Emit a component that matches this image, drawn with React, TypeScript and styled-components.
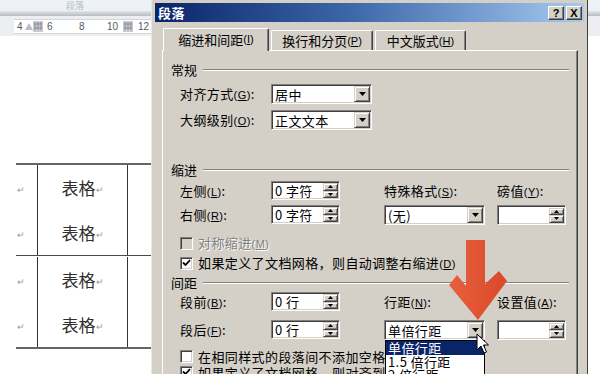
import React from "react";
import styled, { createGlobalStyle } from "styled-components";

const GlobalStyle = createGlobalStyle`
  html, body { margin: 0; padding: 0; background: #ffffff; }
  body { font-family: "Noto Sans CJK SC", "Noto Sans", sans-serif; }
`;

const Screen = styled.div`
  position: relative;
  width: 600px;
  height: 374px;
  overflow: hidden;
  display: flex;
  background: #ffffff;
`;

/* ---------- Word document behind ---------- */
const DocPane = styled.div<{ $w: number }>`
  width: ${(p) => p.$w}px;
  flex-shrink: 0;
  display: flex;
  flex-direction: column;
  background: #ffffff;
`;
const RibbonLabel = styled.div`
  height: 11px;
  background: #eef1f5;
  color: #b3bccb;
  font-size: 9px;
  line-height: 11px;
  padding-left: 66px;
  white-space: nowrap;
  overflow: hidden;
`;
const RibbonEdge = styled.div`
  height: 5px;
  background: linear-gradient(#e2e5e9, #b7bcc3);
`;
const RulerBar = styled.div`
  height: 20px;
  background: #eceef1;
  display: flex;
  align-items: center;
  padding-left: 14px;
`;
const Ruler = styled.div`
  flex: 1;
  height: 13px;
  display: flex;
  align-items: center;
  background: #ffffff;
  border-top: 1px solid #d3d6da;
  border-bottom: 1px solid #d3d6da;
  font-family: "Liberation Sans", sans-serif;
  font-size: 10px;
  color: #5a5a5a;
  overflow: hidden;
`;
const RulerNum = styled.span<{ $ml: number; $w: number }>`
  flex-shrink: 0;
  margin-left: ${(p) => p.$ml}px;
  width: ${(p) => p.$w}px;
  line-height: 13px;
`;
const RulerMarker = styled.span<{ $ml: number }>`
  flex-shrink: 0;
  margin-left: ${(p) => p.$ml}px;
  width: 10px;
  height: 11px;
  background: #c9ccd1;
  display: flex;
  align-items: center;
  justify-content: center;
`;
const RulerTab = styled.span`
  flex-shrink: 0;
  margin-left: 2px;
  width: 0;
  height: 0;
  border-left: 4px solid transparent;
  border-right: 4px solid transparent;
  border-bottom: 7px solid #b8bcc2;
`;
const Table = styled.div`
  margin: 127px 0 0 16px;
  border-top: 2px solid #666666;
  border-bottom: 2px solid #666666;
`;
const TableRow = styled.div<{ $divider?: boolean }>`
  display: grid;
  grid-template-columns: 21px 91px 1fr;
  border-top: ${(p) => (p.$divider ? "1px solid #4a4a4a" : "none")};
  padding-top: ${(p) => (p.$divider ? "1px" : "0")};
`;
const Cell = styled.div<{ $mid?: boolean }>`
  display: flex;
  flex-direction: column;
  border-left: ${(p) => (p.$mid ? "1px solid #333" : "none")};
  border-right: ${(p) => (p.$mid ? "1px solid #333" : "none")};
`;
const Para = styled.div<{ $center?: boolean }>`
  height: 45px;
  display: flex;
  align-items: center;
  justify-content: ${(p) => (p.$center ? "center" : "flex-start")};
  padding-left: ${(p) => (p.$center ? "0" : "1px")};
`;
const CellText = styled.span`
  font-size: 17px;
  color: #2e2e2e;
`;
const ParaMark = styled.span`
  font-size: 9px;
  color: #9a9a9a;
  margin-top: 4px;
`;

/* ---------- Dialog ---------- */
const Dialog = styled.div`
  width: 437px;
  flex-shrink: 0;
  box-sizing: border-box;
  background: #d4d0c8;
  padding: 3px 3px 0 3px;
  border-left: 1px solid #e9e7e2;
  border-right: 1px solid #404040;
  display: flex;
  flex-direction: column;
  font-size: 13px;
  color: #000;
`;
const TitleBar = styled.div`
  height: 19px;
  flex-shrink: 0;
  display: flex;
  align-items: center;
  padding: 0 2px 0 3px;
  background: linear-gradient(to right, #0a246a 0%, #3b66a8 45%, #a6caf0 100%);
`;
const TitleText = styled.span`
  flex: 1;
  color: #ffffff;
  font-weight: bold;
  font-size: 13px;
  letter-spacing: 0.5px;
`;
const CaptionButton = styled.span`
  width: 16px;
  height: 14px;
  box-sizing: border-box;
  margin-left: 2px;
  background: #d4d0c8;
  border: 1px solid;
  border-color: #ffffff #404040 #404040 #ffffff;
  box-shadow: inset -1px -1px #808080;
  display: flex;
  align-items: center;
  justify-content: center;
  font-family: "Liberation Sans", sans-serif;
  font-weight: bold;
  font-size: 11px;
  color: #000;
`;
const Body = styled.div`
  flex: 1;
  display: flex;
  flex-direction: column;
  padding: 6px 6px 0 7px;
`;
const TabStrip = styled.div`
  display: flex;
  align-items: flex-end;
  height: 22px;
  padding-left: 1px;
  position: relative;
  z-index: 1;
`;
const Tab = styled.div<{ $w: number; $active?: boolean }>`
  width: ${(p) => p.$w}px;
  height: ${(p) => (p.$active ? 23 : 20)}px;
  margin-left: ${(p) => (p.$active ? 0 : 2)}px;
  margin-bottom: ${(p) => (p.$active ? -1 : 0)}px;
  box-sizing: border-box;
  background: #d4d0c8;
  border-top: 1px solid #ffffff;
  border-left: 1px solid #ffffff;
  border-right: 1px solid #404040;
  box-shadow: inset -1px 0 #808080;
  border-radius: 2px 2px 0 0;
  display: flex;
  align-items: center;
  justify-content: center;
  font-size: 13px;
  white-space: nowrap;
  padding-bottom: ${(p) => (p.$active ? 2 : 0)}px;
`;
const Panel = styled.div`
  flex: 1;
  display: flex;
  flex-direction: column;
  border-top: 1px solid #ffffff;
  border-left: 1px solid #ffffff;
  border-right: 1px solid #404040;
  box-shadow: inset -1px 0 #808080;
  padding: 0 8px 0 8px;
`;
const Heading = styled.div<{ $mt: number }>`
  margin-top: ${(p) => p.$mt}px;
  height: 16px;
  display: flex;
  align-items: center;
  gap: 6px;
  line-height: 16px;
`;
const Rule = styled.span`
  flex: 1;
  height: 0;
  border-top: 1px solid #808080;
  border-bottom: 1px solid #ffffff;
`;
const Indented = styled.div`
  padding-left: 9px;
  display: flex;
  flex-direction: column;
`;
const FieldRow = styled.div<{ $mt: number }>`
  margin-top: ${(p) => p.$mt}px;
  height: 20px;
  display: flex;
  align-items: center;
`;
const Label = styled.span<{ $w?: number; $disabled?: boolean }>`
  width: ${(p) => (p.$w ? `${p.$w}px` : "auto")};
  flex-shrink: 0;
  line-height: 19px;
  white-space: nowrap;
  letter-spacing: 0.4px;
  color: ${(p) => (p.$disabled ? "#808080" : "#000")};
  text-shadow: ${(p) => (p.$disabled ? "1px 1px #ffffff" : "none")};
`;
const Key = styled.span`
  font-family: "Liberation Sans", sans-serif;
  font-size: 11px;
  text-decoration: underline;
`;
const Paren = styled.span`
  font-family: "Liberation Sans", sans-serif;
  font-size: 11px;
`;
const FormGrid = styled.div<{ $mt: number; $row: number }>`
  margin-top: ${(p) => p.$mt}px;
  display: grid;
  grid-template-columns: 91px 113px 113px 1fr;
  grid-auto-rows: ${(p) => p.$row}px;
  align-items: start;
`;
const Sunken = styled.div<{ $w: number; $h: number }>`
  position: relative;
  width: ${(p) => p.$w}px;
  height: ${(p) => p.$h}px;
  box-sizing: border-box;
  background: #ffffff;
  border: 1px solid;
  border-color: #808080 #ffffff #ffffff #808080;
  box-shadow: inset 1px 1px #404040, inset -1px -1px #d4d0c8;
  display: flex;
  align-items: center;
  padding: 1px 1px 1px 3px;
  white-space: nowrap;
  font-size: 13px;
  line-height: 15px;
`;
const FieldText = styled.span`
  flex: 1;
  letter-spacing: 0.4px;
`;
const Raised = styled.span`
  box-sizing: border-box;
  background: #d4d0c8;
  border: 1px solid;
  border-color: #d4d0c8 #404040 #404040 #d4d0c8;
  box-shadow: inset 1px 1px #ffffff, inset -1px -1px #808080;
  display: flex;
  align-items: center;
  justify-content: center;
`;
const DropButton = styled(Raised)`
  width: 16px;
  height: 16px;
`;
const SpinColumn = styled.span`
  width: 15px;
  height: 15px;
  display: flex;
  flex-direction: column;
`;
const SpinHalf = styled(Raised)`
  flex: 1;
`;
const CheckRow = styled.div<{ $mt: number }>`
  margin-top: ${(p) => p.$mt}px;
  height: 16px;
  display: flex;
  align-items: center;
  gap: 5px;
`;
const Box = styled.span<{ $disabled?: boolean }>`
  width: 13px;
  height: 13px;
  flex-shrink: 0;
  box-sizing: border-box;
  background: ${(p) => (p.$disabled ? "#d4d0c8" : "#ffffff")};
  border: 1px solid;
  border-color: #808080 #ffffff #ffffff #808080;
  box-shadow: inset 1px 1px #404040, inset -1px -1px #d4d0c8;
  display: flex;
  align-items: center;
  justify-content: center;
`;
const ListBox = styled.div`
  position: absolute;
  left: 0;
  top: 100%;
  margin-top: 1px;
  width: 100px;
  box-sizing: border-box;
  background: #ffffff;
  border: 1px solid #000000;
  z-index: 3;
`;
const ListItem = styled.div<{ $selected?: boolean }>`
  height: 13.5px;
  line-height: 14px;
  padding-left: 2px;
  font-size: 13px;
  letter-spacing: 0.4px;
  white-space: nowrap;
  background: ${(p) => (p.$selected ? "#0a246a" : "#ffffff")};
  color: ${(p) => (p.$selected ? "#ffffff" : "#000000")};
`;

/* ---------- Overlays ---------- */
const ArrowOverlay = styled.svg`
  position: absolute;
  left: 446px;
  top: 238px;
  z-index: 4;
`;
const CursorOverlay = styled.svg`
  position: absolute;
  left: 476px;
  top: 333px;
  z-index: 5;
`;

/* ---------- small drawings ---------- */
const DownTri = () => (
  <svg width="7" height="4" viewBox="0 0 7 4">
    <path d="M0 0 H7 L3.5 4 Z" fill="#000" />
  </svg>
);
const SmallTri = ({ up }: { up?: boolean }) => (
  <svg width="5" height="3" viewBox="0 0 5 3">
    <path d={up ? "M0 3 H5 L2.5 0 Z" : "M0 0 H5 L2.5 3 Z"} fill="#000" />
  </svg>
);
const Tick = () => (
  <svg width="9" height="8" viewBox="0 0 9 8">
    <path d="M1 3.5 L3.5 6 L8 1.2" fill="none" stroke="#000" strokeWidth="1.8" />
  </svg>
);
const GridIcon = () => (
  <svg width="8" height="8" viewBox="0 0 8 8">
    <path d="M1 0 V8 M4 0 V8 M7 0 V8 M0 2 H8 M0 6 H8" stroke="#8a8e94" strokeWidth="1" />
  </svg>
);

const L = ({ t, k, w, disabled }: { t: string; k: string; w?: number; disabled?: boolean }) => (
  <Label $w={w} $disabled={disabled}>
    {t}
    <Paren>(</Paren>
    <Key>{k}</Key>
    <Paren>)</Paren>
    {k && !disabled ? ":" : ""}
  </Label>
);

const Select = ({ w, text, children }: { w: number; text: string; children?: React.ReactNode }) => (
  <Sunken $w={w} $h={20}>
    <FieldText>{text}</FieldText>
    <DropButton>
      <DownTri />
    </DropButton>
    {children}
  </Sunken>
);

const Spin = ({ text, h = 19 }: { text: string; h?: number }) => (
  <Sunken $w={69} $h={h}>
    <FieldText>{text}</FieldText>
    <SpinColumn>
      <SpinHalf>
        <SmallTri up />
      </SpinHalf>
      <SpinHalf>
        <SmallTri />
      </SpinHalf>
    </SpinColumn>
  </Sunken>
);

const CellPair = () => (
  <>
    <Cell>
      <Para>
        <ParaMark>↵</ParaMark>
      </Para>
      <Para>
        <ParaMark>↵</ParaMark>
      </Para>
    </Cell>
    <Cell $mid>
      <Para $center>
        <CellText>表格</CellText>
        <ParaMark>↵</ParaMark>
      </Para>
      <Para $center>
        <CellText>表格</CellText>
        <ParaMark>↵</ParaMark>
      </Para>
    </Cell>
    <Cell />
  </>
);

export default function App() {
  return (
    <>
      <GlobalStyle />
      <Screen>
        <DocPane $w={151}>
          <RibbonLabel>段落</RibbonLabel>
          <RibbonEdge />
          <RulerBar>
            <Ruler>
              <RulerNum $ml={3} $w={6}>4</RulerNum>
              <RulerTab />
              <RulerMarker $ml={0}>
                <GridIcon />
              </RulerMarker>
              <RulerNum $ml={4} $w={6}>6</RulerNum>
              <RulerNum $ml={26} $w={6}>8</RulerNum>
              <RulerNum $ml={22} $w={11}>10</RulerNum>
              <RulerMarker $ml={5}>
                <GridIcon />
              </RulerMarker>
              <RulerNum $ml={5} $w={11}>12</RulerNum>
            </Ruler>
          </RulerBar>
          <Table>
            <TableRow>
              <CellPair />
            </TableRow>
            <TableRow $divider>
              <CellPair />
            </TableRow>
          </Table>
        </DocPane>

        <Dialog>
          <TitleBar>
            <TitleText>段落</TitleText>
            <CaptionButton>?</CaptionButton>
            <CaptionButton>X</CaptionButton>
          </TitleBar>
          <Body>
            <TabStrip>
              <Tab $w={106} $active>
                缩进和间距<Paren>(</Paren>
                <Key>I</Key>
                <Paren>)</Paren>
              </Tab>
              <Tab $w={102}>
                换行和分页<Paren>(</Paren>
                <Key>P</Key>
                <Paren>)</Paren>
              </Tab>
              <Tab $w={91}>
                中文版式<Paren>(</Paren>
                <Key>H</Key>
                <Paren>)</Paren>
              </Tab>
            </TabStrip>
            <Panel>
              <Heading $mt={11}>
                常规
                <Rule />
              </Heading>
              <Indented>
                <FieldRow $mt={6}>
                  <L t="对齐方式" k="G" w={91} />
                  <Select w={101} text="居中" />
                </FieldRow>
                <FieldRow $mt={6}>
                  <L t="大纲级别" k="O" w={91} />
                  <Select w={101} text="正文文本" />
                </FieldRow>
              </Indented>

              <Heading $mt={32}>
                缩进
                <Rule />
              </Heading>
              <Indented>
                <FormGrid $mt={3} $row={24}>
                  <L t="左侧" k="L" />
                  <Spin text="0 字符" />
                  <L t="特殊格式" k="S" />
                  <L t="磅值" k="Y" />
                  <L t="右侧" k="R" />
                  <Spin text="0 字符" />
                  <Select w={101} text="(无)" />
                  <Spin text="" h={20} />
                </FormGrid>
                <CheckRow $mt={6}>
                  <Box $disabled />
                  <L t="对称缩进" k="M" disabled />
                </CheckRow>
                <CheckRow $mt={4}>
                  <Box>
                    <Tick />
                  </Box>
                  <Label>
                    如果定义了文档网格，则自动调整右缩进<Paren>(</Paren>
                    <Key>D</Key>
                    <Paren>)</Paren>
                  </Label>
                </CheckRow>
              </Indented>

              <Heading $mt={4}>
                间距
                <Rule />
              </Heading>
              <Indented>
                <FormGrid $mt={1} $row={28}>
                  <L t="段前" k="B" />
                  <Spin text="0 行" />
                  <L t="行距" k="N" />
                  <L t="设置值" k="A" />
                  <L t="段后" k="F" />
                  <Spin text="0 行" />
                  <Select w={101} text="单倍行距">
                    <ListBox>
                      <ListItem $selected>单倍行距</ListItem>
                      <ListItem>1.5 倍行距</ListItem>
                      <ListItem>2 倍行距</ListItem>
                    </ListBox>
                  </Select>
                  <Spin text="" h={20} />
                </FormGrid>
                <CheckRow $mt={0}>
                  <Box />
                  <Label>在相同样式的段落间不添加空格</Label>
                </CheckRow>
                <CheckRow $mt={0}>
                  <Box>
                    <Tick />
                  </Box>
                  <Label>如果定义了文档网格，则对齐到网格</Label>
                </CheckRow>
              </Indented>
            </Panel>
          </Body>
        </Dialog>

        <DocPane $w={12}>
          <RibbonLabel />
          <RibbonEdge />
          <RulerBar />
        </DocPane>

        <ArrowOverlay width="64" height="86" viewBox="0 0 64 86">
          <defs>
            <linearGradient id="ar" x1="0" y1="0" x2="1" y2="0">
              <stop offset="0" stopColor="#e8603c" />
              <stop offset="1" stopColor="#d9482a" />
            </linearGradient>
          </defs>
          <polygon
            points="20,2 39,2 39,46 53,33 61,43 32,82 3,47 11,37 20,48"
            fill="url(#ar)"
          />
        </ArrowOverlay>
        <CursorOverlay width="14" height="22" viewBox="0 0 14 22">
          <path
            d="M1 1 L1 17 L5 13 L8 20 L10.5 19 L7.5 12 L12.5 12 Z"
            fill="#ffffff"
            stroke="#000000"
            strokeWidth="1"
            strokeLinejoin="round"
          />
        </CursorOverlay>
      </Screen>
    </>
  );
}
